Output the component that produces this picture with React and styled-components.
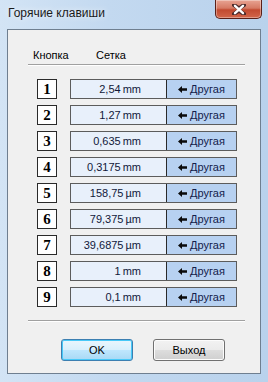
import React from 'react';
import styled, { createGlobalStyle, css } from 'styled-components';

const GlobalStyle = createGlobalStyle`
  html, body {
    margin: 0;
    padding: 0;
  }
  body {
    width: 268px;
    height: 382px;
    overflow: hidden;
    font-family: "Liberation Sans", Arial, sans-serif;
  }
`;

const ROWS = [
  ['1', '2,54', 'mm'],
  ['2', '1,27', 'mm'],
  ['3', '0,635', 'mm'],
  ['4', '0,3175', 'mm'],
  ['5', '158,75', 'µm'],
  ['6', '79,375', 'µm'],
  ['7', '39,6875', 'µm'],
  ['8', '1', 'mm'],
  ['9', '0,1', 'mm'],
];

const Window = styled.div`
  width: 268px;
  height: 382px;
  box-sizing: border-box;
  display: flex;
  flex-direction: column;
  background: linear-gradient(90deg, #d3e4f5 0%, #c3d9f0 40%, #b9d2ec 100%);
`;

const TitleBar = styled.div`
  height: 29px;
  display: flex;
  align-items: flex-start;
  justify-content: space-between;
  padding: 0 6px 0 8px;
`;

const Title = styled.div`
  margin-top: 6px;
  font-size: 12px;
  color: #1a1a1a;
  text-shadow: 0 0 6px rgba(255, 255, 255, 0.9);
`;

const Close = styled.div`
  width: 47px;
  height: 19px;
  box-sizing: border-box;
  border: 1px solid #5a2018;
  border-top: none;
  border-radius: 0 0 5px 5px;
  background: linear-gradient(180deg, #e8a493 0%, #d67a64 45%, #c24a30 55%, #d2664a 100%);
  box-shadow: inset 0 0 0 1px rgba(255, 255, 255, 0.35);
  display: flex;
  align-items: center;
  justify-content: center;
`;

const Client = styled.div`
  flex: 1;
  margin: 0 7px 8px 7px;
  border: 1px solid #6f7f90;
  background: #f0f0f0;
  display: flex;
  flex-direction: column;
  padding: 0 15px 0 20px;
`;

const Header = styled.div`
  display: flex;
  margin-top: 17px;
  height: 16px;
  padding-left: 5px;
  font-size: 11px;
  line-height: 16px;
  color: #000;
`;

const HeaderCell = styled.div`
  width: ${p => p.w}px;
`;

const Separator = styled.div`
  width: 217px;
  height: 1px;
  background: #a0a0a0;
  border-bottom: 1px solid #ffffff;
  margin-top: ${p => p.top}px;
`;

const List = styled.div`
  display: flex;
  flex-direction: column;
  gap: 6px;
  margin-top: 13px;
  padding-left: 9px;
`;

const Row = styled.div`
  display: flex;
  align-items: center;
  height: 20px;
`;

const KeyBox = styled.div`
  width: 20px;
  height: 20px;
  box-sizing: border-box;
  border: 1px solid #2a2a2a;
  background: #fff;
  display: flex;
  align-items: center;
  justify-content: center;
  font-family: "Liberation Serif", "Times New Roman", serif;
  font-weight: bold;
  font-size: 15px;
  color: #000;
`;

const Field = styled.div`
  margin-left: 13px;
  display: flex;
  height: 20px;
  box-sizing: border-box;
  border: 1px solid #5c5c5c;
`;

const Value = styled.div`
  width: 96px;
  box-sizing: border-box;
  background: #e8f0fb;
  border-right: 1px solid #2a2a2a;
  padding-right: 25px;
  display: flex;
  align-items: center;
  justify-content: flex-end;
  font-size: 11px;
  color: #10183a;
  white-space: nowrap;
`;

const Unit = styled.span`
  margin-left: 2px;
`;

const Other = styled.div`
  width: 69px;
  background: #b7d1f1;
  display: flex;
  align-items: center;
  justify-content: center;
  gap: 3px;
  font-size: 11px;
  color: #13204a;
`;

const Footer = styled.div`
  display: flex;
  gap: 20px;
  margin-top: 17px;
  padding-left: 33px;
`;

const Button = styled.div`
  width: 72px;
  height: 22px;
  box-sizing: border-box;
  border-radius: 3px;
  border: 1px solid #707070;
  background: linear-gradient(180deg, #f2f2f2 0%, #ebebeb 48%, #dddddd 52%, #cfcfcf 100%);
  box-shadow: inset 0 0 0 1px #fcfcfc;
  display: flex;
  align-items: center;
  justify-content: center;
  font-size: 11px;
  color: #000;
  ${p => p.focused && css`
    border-color: #3c7fb1;
    background: linear-gradient(180deg, #eaf6fd 0%, #d9f0fc 48%, #bee6fd 52%, #a7d9f5 100%);
    box-shadow: inset 0 0 0 1px #48c9f8;
  `}
`;

const Arrow = () => (
  <svg width="9" height="7" viewBox="0 0 9 7">
    <path d="M0 3.5 L4 0 L4 2.2 L9 2.2 L9 4.8 L4 4.8 L4 7 Z" fill="#0a0a0a" />
  </svg>
);

const CloseX = () => (
  <svg width="14" height="11" viewBox="0 0 14 11">
    <path
      d="M2 1 L7 4.3 L12 1 M2 10 L7 6.7 L12 10"
      stroke="#4a2a2a"
      strokeWidth="4"
      fill="none"
      strokeLinecap="round"
      strokeLinejoin="round"
    />
    <path
      d="M3 1.8 L11 9.2 M11 1.8 L3 9.2"
      stroke="#ffffff"
      strokeWidth="2.4"
      fill="none"
      strokeLinecap="round"
    />
  </svg>
);

export default function App() {
  return (
    <>
      <GlobalStyle />
      <Window>
        <TitleBar>
          <Title>Горячие клавиши</Title>
          <Close><CloseX /></Close>
        </TitleBar>
        <Client>
          <Header>
            <HeaderCell w={63}>Кнопка</HeaderCell>
            <HeaderCell w={60}>Сетка</HeaderCell>
          </Header>
          <Separator top={1} />
          <List>
            {ROWS.map(([key, num, unit]) => (
              <Row key={key}>
                <KeyBox>{key}</KeyBox>
                <Field>
                  <Value>{num}<Unit>{unit}</Unit></Value>
                  <Other><Arrow />Другая</Other>
                </Field>
              </Row>
            ))}
          </List>
          <Separator top={13} />
          <Footer>
            <Button focused>OK</Button>
            <Button>Выход</Button>
          </Footer>
        </Client>
      </Window>
    </>
  );
}
